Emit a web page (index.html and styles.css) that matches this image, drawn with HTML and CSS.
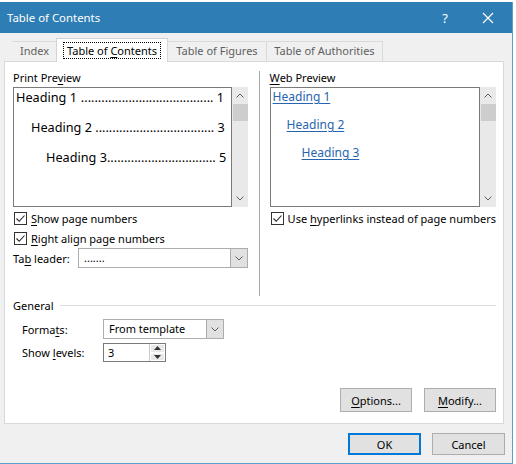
FILE: index.html
```
<!DOCTYPE html>
<html lang="en-US">
<head>
<meta charset="UTF-8" />
<title>Table of Contents</title>
<link rel="stylesheet" href="styles.css">
</head>
<body>
    <div class="doc-strip"></div>
    <div class="dialog">
        <div class="titlebar">
            <span class="title">Table of Contents</span>
            <span class="help">?</span>
            <svg class="close" width="12" height="12" viewBox="0 0 12 12">
                <path d="M1 1L11 11M11 1L1 11" stroke="#fff" stroke-width="1.2" fill="none"></path>
            </svg>
        </div>
        <div class="body">
            <div class="tabs">
                <div class="tab tab--index">Index</div>
                <div class="tab tab--active"><span class="focus">Table of <u>C</u>ontents</span></div>
                <div class="tab tab--figures">Table of Figures</div>
                <div class="tab tab--authorities">Table of Authorities</div>
            </div>
            <div class="panel">
                <div class="columns">
                    <div class="col col--left">
                        <div class="label">Print Pre<u>v</u>iew</div>
                        <div class="preview">
                            <div class="frame print">
                                <div class="toc-line lvl1"><span>Heading 1&nbsp;</span><span class="dots">.......................................</span><span>&nbsp;1</span></div>
                                <div class="toc-line lvl2"><span>Heading 2&nbsp;</span><span class="dots">...................................</span><span>&nbsp;3</span></div>
                                <div class="toc-line lvl3"><span>Heading 3</span><span class="dots">................................</span><span>&nbsp;5</span></div>
                            </div>
                            <div class="scrollbar">
                                <svg class="arrow" width="8" height="5" viewBox="0 0 8 5"><path d="M0.5 4.5L4 1L7.5 4.5" stroke="#606060" fill="none"></path></svg>
                                <div class="thumb"></div>
                                <div class="track"></div>
                                <svg class="arrow" width="8" height="5" viewBox="0 0 8 5"><path d="M0.5 0.5L4 4L7.5 0.5" stroke="#606060" fill="none"></path></svg>
                            </div>
                        </div>
                        <label class="check"><span class="box"><svg width="11" height="11" viewBox="0 0 11 11"><path d="M1.5 5.5L4.2 8.3L9.5 2.5" stroke="#222" stroke-width="1.1" fill="none"></path></svg></span><span><u>S</u>how page numbers</span></label>
                        <label class="check"><span class="box"><svg width="11" height="11" viewBox="0 0 11 11"><path d="M1.5 5.5L4.2 8.3L9.5 2.5" stroke="#222" stroke-width="1.1" fill="none"></path></svg></span><span><u>R</u>ight align page numbers</span></label>
                        <div class="field-row">
                            <span class="field-label">Ta<u>b</u> leader:</span>
                            <div class="combo combo--leader">
                                <span class="combo-value">.......</span>
                                <span class="combo-btn"><svg width="8" height="5" viewBox="0 0 8 5"><path d="M0.5 0.5L4 4L7.5 0.5" stroke="#606060" fill="none"></path></svg></span>
                            </div>
                        </div>
                    </div>
                    <div class="divider"></div>
                    <div class="col col--right">
                        <div class="label"><u>W</u>eb Preview</div>
                        <div class="preview">
                            <div class="frame web">
                                <a class="web-link lvl1">Heading 1</a>
                                <a class="web-link lvl2">Heading 2</a>
                                <a class="web-link lvl3">Heading 3</a>
                            </div>
                            <div class="scrollbar">
                                <svg class="arrow" width="8" height="5" viewBox="0 0 8 5"><path d="M0.5 4.5L4 1L7.5 4.5" stroke="#606060" fill="none"></path></svg>
                                <div class="thumb"></div>
                                <div class="track"></div>
                                <svg class="arrow" width="8" height="5" viewBox="0 0 8 5"><path d="M0.5 0.5L4 4L7.5 0.5" stroke="#606060" fill="none"></path></svg>
                            </div>
                        </div>
                        <label class="check"><span class="box"><svg width="11" height="11" viewBox="0 0 11 11"><path d="M1.5 5.5L4.2 8.3L9.5 2.5" stroke="#222" stroke-width="1.1" fill="none"></path></svg></span><span>Use <u>h</u>yperlinks instead of page numbers</span></label>
                    </div>
                </div>
                <div class="group-title"><span>General</span><div class="group-line"></div></div>
                <div class="general">
                    <div class="field-row">
                        <span class="field-label">Forma<u>t</u>s:</span>
                        <div class="combo combo--formats">
                            <span class="combo-value">From template</span>
                            <span class="combo-btn"><svg width="8" height="5" viewBox="0 0 8 5"><path d="M0.5 0.5L4 4L7.5 0.5" stroke="#606060" fill="none"></path></svg></span>
                        </div>
                    </div>
                    <div class="field-row">
                        <span class="field-label">Show <u>l</u>evels:</span>
                        <div class="spinner">
                            <span class="spin-value">3</span>
                            <span class="spin-btns">
                                <span class="spin-btn"><svg width="7" height="4" viewBox="0 0 7 4"><path d="M0 4L3.5 0L7 4Z" fill="#333"></path></svg></span>
                                <span class="spin-btn"><svg width="7" height="4" viewBox="0 0 7 4"><path d="M0 0L3.5 4L7 0Z" fill="#333"></path></svg></span>
                            </span>
                        </div>
                    </div>
                </div>
                <div class="panel-buttons">
                    <button class="btn"><u>O</u>ptions...</button>
                    <button class="btn"><u>M</u>odify...</button>
                </div>
            </div>
            <div class="footer">
                <button class="btn btn--default">OK</button>
                <button class="btn btn--footer">Cancel</button>
            </div>
        </div>
    </div>
</body>
</html>
```
FILE: styles.css
```
*{
    box-sizing: border-box;
}
body{
    margin: 0;
    background: #fff;
    font-family: "Noto Sans", "Open Sans", sans-serif;
    font-size: 11px;
    color: #000;
    overflow: hidden;
}
u{
    text-decoration: underline;
    text-underline-offset: 2px;
}
.doc-strip{
    height: 2px;
}
.dialog{
    width: 513px;
    height: 462px;
    background: #f0f0f0;
    border-right: 1px solid #5d9dca;
    border-bottom: 1px solid #5d9dca;
}
.titlebar{
    height: 31px;
    background: #2e7db4;
    color: #fff;
    display: flex;
    align-items: center;
    padding-left: 7px;
}
.title{
    flex: 1;
    font-size: 11.4px;
}
.help{
    font-size: 13px;
    margin-right: 34px;
}
.close{
    margin-right: 18px;
}
.body{
    padding: 5px 0 0 4px;
}
.tabs{
    display: flex;
    align-items: flex-end;
    height: 23px;
    margin-left: 9px;
    position: relative;
    z-index: 1;
}
.tab{
    height: 20px;
    line-height: 18px;
    text-align: center;
    color: #5f5f5f;
    border: 1px solid #dadada;
    border-bottom: none;
    margin-left: -1px;
    background: #f0f0f0;
    white-space: nowrap;
}
.tab--index{
    width: 45px;
    border-left-color: #f0f0f0;
}
.tab--figures{
    width: 100px;
}
.tab--authorities{
    width: 117px;
}
.tab--active{
    width: 112px;
    height: 24px;
    margin-bottom: -1px;
    background: #fff;
    color: #000;
    padding-top: 3px;
    line-height: 16px;
    border-color: #d4d4d4;
}
.focus{
    display: inline-block;
    border: 1px dotted #000;
    padding: 0 3px;
    line-height: 15px;
}
.panel{
    width: 500px;
    height: 363px;
    background: #fff;
    border: 1px solid #d9d9d9;
    padding: 9px 7px 0 8px;
}
.columns{
    display: flex;
    height: 225px;
}
.col--left{
    width: 235px;
}
.col--right{
    width: 227px;
}
.divider{
    width: 1px;
    background: #a8a8a8;
    margin: 0 10px 0 11px;
}
.label{
    height: 16px;
    line-height: 14px;
}
.preview{
    display: flex;
    height: 120px;
}
.frame{
    flex: 1;
    border: 1px solid #7a7a7a;
    overflow: hidden;
}
.scrollbar{
    width: 16px;
    background: #e9e9e9;
    display: flex;
    flex-direction: column;
    align-items: center;
}
.arrow{
    margin: 6px 0;
}
.thumb{
    width: 15px;
    height: 17px;
    background: #cdcdcd;
}
.track{
    flex: 1;
}
.print{
    padding: 0 7px 0 2px;
    font-size: 12.7px;
}
.toc-line{
    display: flex;
    height: 30px;
    line-height: 18px;
    white-space: nowrap;
}
.toc-line.lvl2{
    padding-left: 15px;
}
.toc-line.lvl3{
    padding-left: 30px;
}
.dots{
    flex: 1;
    text-align: right;
}
.web{
    padding: 0 0 0 2px;
    display: flex;
    flex-direction: column;
    align-items: flex-start;
}
.web-link{
    font-size: 12px;
    color: #2765b0;
    text-decoration: underline;
    text-underline-offset: 2px;
    height: 28px;
    line-height: 17px;
}
.web-link.lvl2{
    margin-left: 14px;
}
.web-link.lvl3{
    margin-left: 29px;
}
.check{
    display: flex;
    align-items: center;
    height: 20px;
    padding-left: 1px;
    white-space: nowrap;
}
.preview + .check{
    margin-top: 1px;
}
.box{
    width: 13px;
    height: 13px;
    border: 1px solid #333;
    background: #fff;
    margin-right: 4px;
    display: flex;
    align-items: center;
    justify-content: center;
    flex: none;
}
.field-row{
    display: flex;
    align-items: center;
}
.field-label{
    width: 65px;
}
.combo{
    display: flex;
    height: 20px;
    border: 1px solid #adadad;
    background: #fff;
}
.combo--leader{
    width: 170px;
}
.combo-value{
    flex: 1;
    padding-left: 5px;
    line-height: 18px;
}
.combo-btn{
    width: 17px;
    background: #e1e1e1;
    border-left: 1px solid #adadad;
    display: flex;
    align-items: center;
    justify-content: center;
}
.group-title{
    display: flex;
    align-items: center;
    height: 18px;
}
.group-line{
    flex: 1;
    height: 1px;
    background: #dcdcdc;
    margin-left: 6px;
}
.general{
    padding-left: 9px;
    padding-top: 5px;
}
.general .field-label{
    width: 81px;
}
.combo--formats{
    width: 121px;
}
.general .field-row + .field-row{
    margin-top: 4px;
}
.spinner{
    display: flex;
    width: 63px;
    height: 19px;
    border: 1px solid #7a7a7a;
    background: #fff;
}
.spin-value{
    flex: 1;
    padding-left: 4px;
    line-height: 17px;
}
.spin-btns{
    width: 16px;
    display: flex;
    flex-direction: column;
    border-left: 1px solid #c8c8c8;
}
.spin-btn{
    flex: 1;
    background: #e8e8e8;
    border: 1px solid #fff;
    display: flex;
    align-items: center;
    justify-content: center;
}
.panel-buttons{
    display: flex;
    justify-content: flex-end;
    gap: 12px;
    margin-top: 26px;
}
.btn{
    font-family: inherit;
    font-size: 11px;
    color: #000;
    width: 72px;
    height: 24px;
    background: #e1e1e1;
    border: 1px solid #adadad;
    padding: 0;
}
.footer{
    display: flex;
    justify-content: flex-end;
    gap: 11px;
    padding: 9px 7px 0 0;
}
.btn--default,
.btn--footer{
    width: 73px;
    height: 22px;
}
.btn--default{
    border: 2px solid #0078d7;
}
```
